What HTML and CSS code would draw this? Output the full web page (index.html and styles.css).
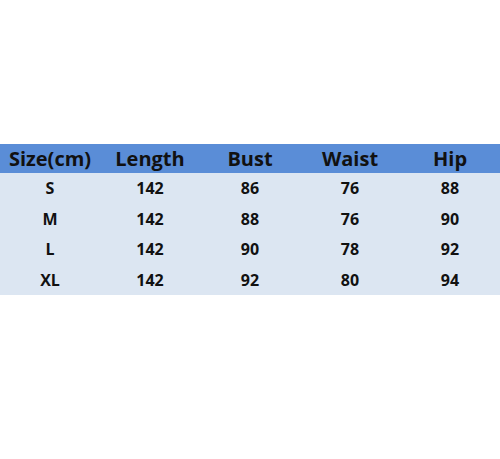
FILE: index.html
```html
<!DOCTYPE html>
<html>
<head>
<meta charset="utf-8">
<link rel="stylesheet" href="styles.css">
</head>
<body>
<div class="page">
  <table class="sizes">
    <thead>
      <tr><th>Size(cm)</th><th>Length</th><th>Bust</th><th>Waist</th><th>Hip</th></tr>
    </thead>
    <tbody>
      <tr><td>S</td><td>142</td><td>86</td><td>76</td><td>88</td></tr>
      <tr><td>M</td><td>142</td><td>88</td><td>76</td><td>90</td></tr>
      <tr><td>L</td><td>142</td><td>90</td><td>78</td><td>92</td></tr>
      <tr><td>XL</td><td>142</td><td>92</td><td>80</td><td>94</td></tr>
    </tbody>
  </table>
</div>
</body>
</html>
```

FILE: styles.css
```css
html, body {
  margin: 0;
  padding: 0;
  background: #ffffff;
}
.page {
  width: 500px;
  height: 459px;
  padding-top: 144px;
  box-sizing: border-box;
}
.sizes {
  width: 500px;
  border-collapse: collapse;
  table-layout: fixed;
  font-family: "Open Sans", "DejaVu Sans", sans-serif;
  font-weight: bold;
  color: #111111;
}
.sizes th {
  background: #5a8dd7;
  height: 29px;
  padding: 0;
  font-size: 20px;
  line-height: 29px;
  text-align: center;
}
.sizes td {
  background: #dce6f2;
  height: 30.5px;
  padding: 0;
  font-size: 16px;
  line-height: 30px;
  text-align: center;
}
```
